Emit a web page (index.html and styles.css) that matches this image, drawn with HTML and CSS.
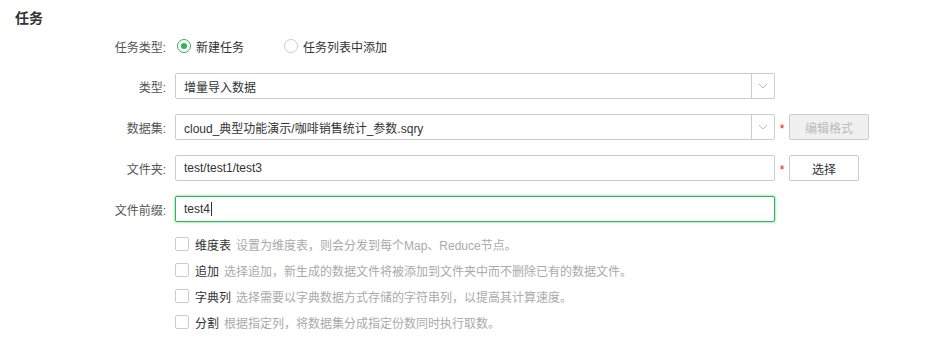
FILE: index.html
```html
<!DOCTYPE html>
<html lang="zh">
<head>
<meta charset="utf-8">
<title>任务</title>
<link rel="stylesheet" href="styles.css">
</head>
<body>
<div class="page">
  <div class="title">任务</div>
  <div class="form">
    <div class="row row-radio">
      <div class="label">任务类型:</div>
      <div class="radios">
        <span class="radio-item"><span class="radio checked"></span>新建任务</span>
        <span class="radio-item"><span class="radio"></span>任务列表中添加</span>
      </div>
    </div>
    <div class="row">
      <div class="label">类型:</div>
      <div class="control select">
        <span class="value">增量导入数据</span>
        <span class="arrow"><svg width="10" height="6" viewBox="0 0 10 6"><path d="M1 1 L5 5 L9 1" fill="none" stroke="#bbb" stroke-width="1"/></svg></span>
      </div>
    </div>
    <div class="row">
      <div class="label">数据集:</div>
      <div class="control select">
        <span class="value">cloud_典型功能演示/咖啡销售统计_参数.sqry</span>
        <span class="arrow"><svg width="10" height="6" viewBox="0 0 10 6"><path d="M1 1 L5 5 L9 1" fill="none" stroke="#bbb" stroke-width="1"/></svg></span>
      </div>
      <span class="req">*</span>
      <span class="btn disabled">编辑格式</span>
    </div>
    <div class="row">
      <div class="label">文件夹:</div>
      <div class="control"><span class="value">test/test1/test3</span></div>
      <span class="req">*</span>
      <span class="btn small">选择</span>
    </div>
    <div class="row">
      <div class="label">文件前缀:</div>
      <div class="control focused"><span class="value">test4<span class="caret"></span></span></div>
    </div>
  </div>
  <div class="checks">
    <div class="check-row"><span class="box"></span><span class="name">维度表</span><span class="desc">设置为维度表，则会分发到每个Map、Reduce节点。</span></div>
    <div class="check-row"><span class="box"></span><span class="name">追加</span><span class="desc">选择追加，新生成的数据文件将被添加到文件夹中而不删除已有的数据文件。</span></div>
    <div class="check-row"><span class="box"></span><span class="name">字典列</span><span class="desc">选择需要以字典数据方式存储的字符串列，以提高其计算速度。</span></div>
    <div class="check-row"><span class="box"></span><span class="name">分割</span><span class="desc">根据指定列，将数据集分成指定份数同时执行取数。</span></div>
  </div>
</div>
</body>
</html>
```

FILE: styles.css
```css
html, body {
  margin: 0;
  padding: 0;
  background: #fff;
}
body {
  font-family: "Liberation Sans", "Noto Sans CJK SC", sans-serif;
  font-size: 12px;
  color: #333;
}
.page {
  padding: 8px 15px 0 15px;
}
.title {
  font-size: 14px;
  font-weight: bold;
  line-height: 20px;
  color: #333;
}
.form {
  margin-top: 6px;
  display: flex;
  flex-direction: column;
  gap: 15px;
}
.row {
  display: flex;
  align-items: center;
  height: 26px;
}
.row-radio {
  height: 24px;
}
.label {
  width: 151px;
  text-align: right;
  margin-right: 9px;
  color: #555;
  flex: none;
}
.radios {
  display: flex;
  align-items: center;
  gap: 38px;
}
.radio-item {
  display: flex;
  align-items: center;
  color: #333;
}
.radio {
  width: 12px;
  height: 12px;
  border: 1px solid #ccc;
  border-radius: 50%;
  margin-left: 2px;
  margin-right: 5px;
  box-sizing: content-box;
  position: relative;
}
.radio.checked {
  border-color: #2db55d;
}
.radio.checked::after {
  content: "";
  position: absolute;
  left: 3px;
  top: 3px;
  width: 6px;
  height: 6px;
  border-radius: 50%;
  background: #2db55d;
}
.control {
  width: 600px;
  height: 26px;
  box-sizing: border-box;
  border: 1px solid #ccc;
  border-radius: 2px;
  display: flex;
  align-items: center;
  flex: none;
  background: #fff;
}
.value {
  flex: 1;
  padding-left: 8px;
  color: #333;
  white-space: nowrap;
  display: flex;
  align-items: center;
}
.arrow {
  width: 22px;
  height: 100%;
  border-left: 1px solid #ccc;
  display: flex;
  align-items: center;
  justify-content: center;
}
.control.focused {
  border-color: #2db55d;
  box-shadow: 0 0 2px 1px rgba(45, 181, 93, 0.35);
}
.caret {
  display: inline-block;
  width: 1px;
  height: 14px;
  background: #333;
  margin-left: 1px;
}
.req {
  width: 14px;
  text-align: center;
  color: #e81515;
  font-size: 12px;
  line-height: 12px;
  padding-top: 4px;
}
.btn {
  height: 26px;
  box-sizing: border-box;
  width: 80px;
  border: 1px solid #ccc;
  border-radius: 2px;
  display: flex;
  align-items: center;
  justify-content: center;
  background: #fff;
  color: #333;
  font-size: 12px;
}
.btn.small {
  width: 70px;
}
.btn.disabled {
  background: #f0f0f0;
  color: #bbb;
}
.checks {
  margin-top: 9px;
  padding-left: 160px;
}
.check-row {
  height: 26px;
  display: flex;
  align-items: center;
}
.box {
  width: 12px;
  height: 12px;
  border: 1px solid #ccc;
  border-radius: 2px;
  box-sizing: content-box;
  margin-right: 6px;
}
.name {
  color: #333;
  margin-right: 5px;
}
.desc {
  color: #aaa;
}
```
